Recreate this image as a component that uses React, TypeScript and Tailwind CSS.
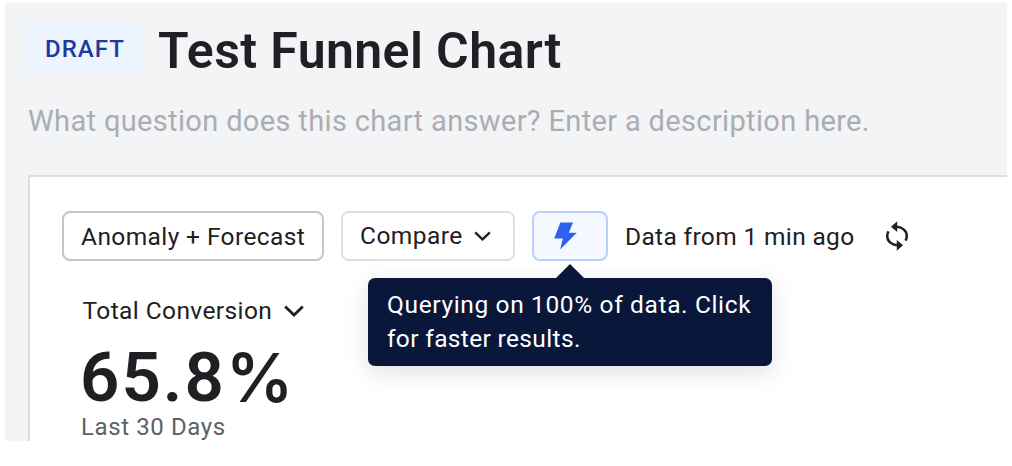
import type { ReactNode } from 'react';

function Chevron({ className }: { className: string }) {
  return (
    <svg viewBox="0 0 20 12" fill="none" className={className}>
      <path d="M1.2 1.6 10 10.1 18.8 1.6" stroke="currentColor" strokeWidth="2.8" />
    </svg>
  );
}

function BoltIcon() {
  return (
    <svg viewBox="0 0 23 28" className="h-[28px] w-[23px]">
      <path d="M6.4.4H19l-4.2 10.4h8L6.2 27.6l2.6-11.2H.2Z" fill="#2f62ea" />
    </svg>
  );
}

function RefreshIcon() {
  return (
    <svg viewBox="0 0 24 30" fill="none" className="h-[30px] w-6">
      <path d="M11 5.7c6 0 10.8 4 10.8 9.3 0 1.8-.4 3.2-1.3 4.7" stroke="#1e2024" strokeWidth="2.5" />
      <path d="M13 24.3c-6 0-10.8-4-10.8-9.3 0-1.8.4-3.2 1.3-4.7" stroke="#1e2024" strokeWidth="2.5" />
      <path d="M6 5.7 12.2.3v10.8ZM18 24.3l-6.2 5.4V18.9Z" fill="#1e2024" />
    </svg>
  );
}

function Button({ className, children }: { className: string; children: ReactNode }) {
  return (
    <button className={`flex h-[50px] shrink-0 items-center rounded-[8px] border-2 ${className}`}>
      {children}
    </button>
  );
}

function Tooltip() {
  return (
    <div className="absolute top-[66.5px] left-[-164px] w-[404px] rounded-[7px] bg-[#09173b] pt-[10px] pb-[10px] pl-[19px] text-left text-[24.5px] leading-[34px] text-white shadow-[0_6px_24px_rgba(0,0,0,0.13)]">
      <svg viewBox="0 0 30 15" className="absolute top-[-14px] left-[187px] h-[15px] w-[30px]">
        <path d="M0 15 15 0l15 15Z" fill="#09173b" />
      </svg>
      <div className="whitespace-nowrap tracking-[0.64px]">Querying on 100% of data. Click</div>
      <div className="whitespace-nowrap tracking-[0.35px]">for faster results.</div>
    </div>
  );
}

export default function App() {
  return (
    <div className="h-[466px] w-[1012px] overflow-hidden bg-white px-[5px] pt-[3px] font-[Roboto,sans-serif] text-[#1e2024]">
      <main className="flex h-[438px] flex-col overflow-hidden bg-[#f3f4f6] pl-[23px]">
        <header className="h-[172px] shrink-0 pt-[21px]">
          <div className="flex h-[50px] items-center">
            <span className="flex h-[50px] w-[114px] items-center rounded-[5px] bg-[#ebf4ff] pl-[17px] text-[24px] leading-none font-medium tracking-[1px] text-[#1e3a9c]">
              DRAFT
            </span>
            <h1 className="ml-[16px] pt-[3px] text-[50px] leading-[54px] font-semibold tracking-[0.4px] whitespace-nowrap">
              Test Funnel Chart
            </h1>
          </div>
          <p className="mt-[29px] text-[29px] leading-[36px] tracking-[0.35px] whitespace-nowrap text-[#abadb5]">
            What question does this chart answer? Enter a description here.
          </p>
        </header>
        <section className="grow border-t-2 border-l-2 border-[#dcdee2] bg-white pt-[34px] pl-[32px]">
          <div className="flex items-center text-[24.5px] leading-none whitespace-nowrap">
            <Button className="w-[262px] border-[#c4c5cc] pt-[2px] pl-[17px] tracking-[0.4px]">Anomaly + Forecast</Button>
            <Button className="ml-[17px] w-[174px] border-[#dfe0e4] pl-[17px] tracking-[0.45px]">
              Compare
              <Chevron className="ml-[11px] h-[10px] w-[17px]" />
            </Button>
            <div className="relative ml-[17px]">
              <Button className="w-[76px] border-[#b5d1fc] bg-[#f5f9ff] pl-[20px]">
                <BoltIcon />
              </Button>
              <Tooltip />
            </div>
            <span className="ml-[17px] w-[259.5px] pt-[2px] tracking-[0.35px]">Data from 1 min ago</span>
            <RefreshIcon />
          </div>
          <div className="mt-[35px] ml-[20.5px] flex h-[30px] items-center text-[24.5px] leading-[30px] tracking-[0.4px]">
            Total Conversion
            <Chevron className="ml-[12px] h-[12px] w-[20px]" />
          </div>
          <div className="mt-[19px] ml-[18px] flex h-[66px] items-center text-[69px] leading-[66px] font-semibold tracking-[2px]">
            65.8<span className="font-[Inter,sans-serif] text-[67px] tracking-normal">%</span>
          </div>
          <div className="ml-[19px] text-[24px] leading-[32px] tracking-[0.6px] text-[#5d606b]">Last 30 Days</div>
        </section>
      </main>
    </div>
  );
}
